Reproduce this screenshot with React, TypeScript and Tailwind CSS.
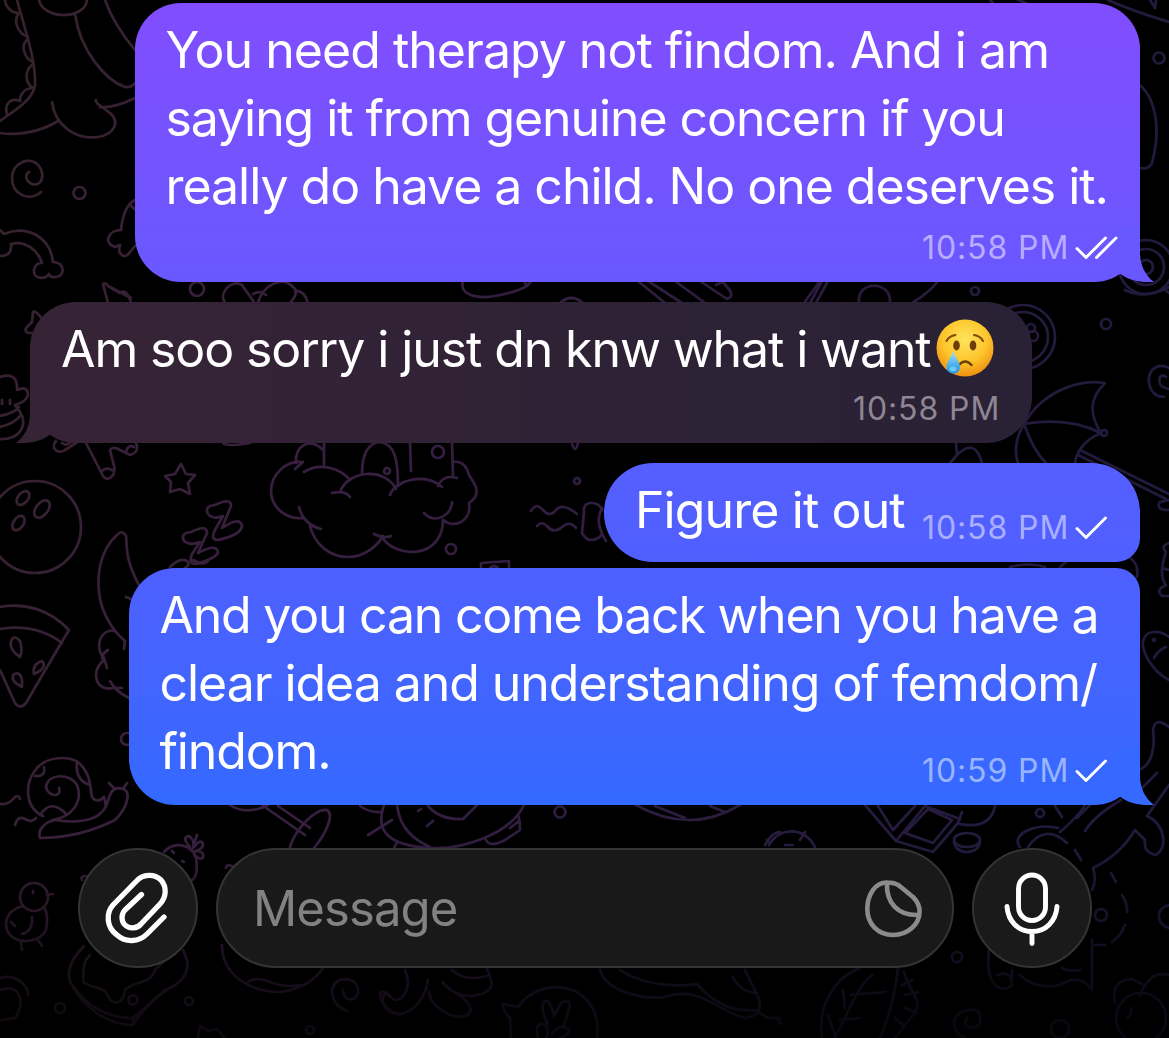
import type { ReactNode } from 'react';

const FONT = "font-[Inter,'Liberation_Sans',sans-serif]";

// Line drawings of the chat wallpaper
const doodles = [
    // dinosaur
    'M17 0C25 30 36 60 35 85C33 100 15 110 0 121',
    'M5 0C6 8 12 13 19 13C13 20 17 33 28 37M28 39C20 45 24 58 33 62M33 64C25 70 24 82 33 88C24 88 20 95 20 101C10 97 4 105 7 114',
    'M39 0C43 20 85 20 87 0M75 14C80 50 105 80 125 87Q131 88 135 83M105 0C112 20 125 38 135 50',
    'M0 133C20 136 42 131 58 121M52 102C55 125 75 140 98 137C115 134 120 122 110 113L98 104Q95 101 96 100M100 107C112 108 125 103 135 98',
    // spiral, bone, paw
    'M41 192C30 202 12 195 12 178C12 163 30 155 39 166C46 176 41 187 32 184C25 181 25 174 29 172',
    'M0 230L4 234C25 225 50 235 53 262C65 262 66 277 55 277Q50 278 49 274C45 280 33 279 34 270Q35 263 42 263C38 250 25 240 11 244C12 252 8 256 0 256',
    'M135 200C125 205 122 220 121 230C108 230 103 243 115 247L120 245C117 255 125 260 130 252L135 246M130 205L138 212',
    // party hat, bow
    'M108 303L103 284Q105 282 108 286L120 293Q127 288 131 303M108 286L131 298',
    'M225 303C218 292 232 279 242 285L254 302M258 302C264 285 282 275 293 287Q300 292 290 303M253 294Q260 290 266 295M295 291Q304 290 308 303',
    'M33 333Q24 334 26 328L32 322L33 312Q36 310 42 319',
    // things peeking out between the first two messages
    'M463 281C458 298 485 299 500 295C520 291 529 286 531 281M524 281L527 286M560 303Q571 293 583 303',
    'M638 281L665 303M648 281L682 303M675 281L705 303M700 281L727 299Q735 296 728 288L722 281M716 285L724 281',
    'M804 303L820 281M810 303L822 281M816 303L828 281M859 303C856 280 892 280 890 303M912 303Q930 292 938 281',
    // cupcake, gingerbread legs, star
    'M0 377Q15 372 17 385V390Q28 385 28 395Q26 402 15 405L20 412C28 425 20 440 0 439M0 416Q15 413 19 407M0 427Q14 424 21 415M2 400V404M10 400V404',
    'M56 441C50 448 58 455 65 450L76 443M62 443Q66 446 70 443M86 443L101 472Q106 484 113 475Q116 470 113 462L110 450Q113 446 120 450L130 455Q140 452 136 443M101 472Q106 466 114 471M126 452Q128 444 134 447',
    'M181 464L186 474L195 475L188 483L190 494L180 489L170 492L171 482L165 476L175 474ZM223 443Q228 447 250 443',
    // moon and zzz
    'M139 585C125 560 127 545 126 536Q122 529 117 535C100 550 97 575 99 592C101 612 112 630 125 641L124 649',
    'M208 514Q204 506 215 505Q231 497 231 506L222 528Q240 516 242 526Q241 535 218 540Q210 540 215 530L223 516Q213 520 208 514Z',
    'M184 541Q180 533 191 532Q207 524 207 533L198 553Q216 543 218 552Q217 558 196 564Q188 564 192 554L200 542Q190 546 184 541Z',
    'M170 567Q180 557 187 561Q191 564 185 568M193 560Q203 566 208 561',
    // castle in the clouds
    'M301 462C285 461 271 475 271 491C271 508 287 520 304 518M299 507C302 520 312 527 321 529M310 526C315 545 330 557 348 557C365 557 378 545 383 536M374 534Q383 539 391 536M381 536C390 550 405 552 415 552C435 550 443 535 443 520',
    'M424 513C435 525 452 515 452 502M443 520C455 530 472 520 469 503Q481 495 474 483L469 475Q465 460 453 462M438 486Q443 474 457 478M390 495C395 480 425 472 442 487M332 493Q345 490 350 497M340 492C348 470 385 467 396 489M304 472C320 462 340 468 350 480M295 469L303 462',
    'M296 463C295 445 310 437 323 450M324 443V466M362 474C362 450 370 443 380 442C395 444 398 460 398 486M410 443L411 471M452 443L453 475',
    'M531 511Q536 502 543 510T556 510T577 514M537 526Q542 520 548 527T562 527T576 528M572 443Q575 455 578 443',
    'M602 510Q600 503 591 503Q583 503 584 512L582 533Q586 540 591 540Q598 540 602 534M602 508Q594 522 606 541M481 567V563L509 561V567M490 568Q494 564 498 568',
    // right edge, upper half
    'M1108 0Q1130 10 1169 22M1150 0L1155 8L1156 0M990 0L993 3M1018 0L1026 3M1141 86C1156 100 1161 130 1152 163Q1148 170 1141 168M1163 288L1169 293M1125 290Q1145 300 1169 287',
    'M1164 397C1150 397 1145 380 1152 370Q1160 363 1169 368M1169 389Q1157 387 1160 377Q1163 374 1166 377',
    'M1024 424C1040 395 1075 378 1105 383C1088 400 1090 415 1101 433C1085 425 1060 418 1024 424C1014 440 1015 455 1018 463M1024 424Q1033 450 1046 463M1101 433Q1078 443 1075 463',
    'M1080 450L1169 494M1078 455L1166 499M1169 500L1160 502Q1155 510 1169 510M956 443L957 455L950 463M957 455Q975 437 982 463',
    'M1169 543Q1160 546 1166 552Q1158 575 1166 585Q1155 590 1162 596H1169M1162 568L1169 570M1010 567Q1030 562 1045 567M1060 567L1066 562M1130 558Q1139 564 1137 577',
    'M1169 680C1150 670 1142 650 1143 642C1145 629 1160 630 1169 637M1154 658Q1158 650 1166 647M1169 727Q1155 716 1153 730C1156 750 1150 765 1141 769M1157 773L1141 789',
    // pizza slice, bush
    'M0 607C25 602 50 610 69 630L60 645L26 703Q20 710 15 703L0 670M0 629C25 625 45 630 62 643',
    'M20 657Q9 650 11 641Q14 634 20 641Q23 650 20 657ZM34 674Q32 664 42 661Q48 668 34 674ZM22 687Q11 682 13 675Q20 670 22 680Z',
    'M115 631C100 628 94 648 104 658L107 668M108 650Q100 655 103 661C90 672 96 692 113 688M110 681Q116 692 129 698M113 688H122M126 597L131 599',
    // snail
    'M43 816C25 808 25 785 34 772C44 755 72 755 80 764C92 776 90 790 92 797Q97 804 104 797L106 806M59 788C62 798 48 797 46 787C48 773 70 773 77 785C84 803 70 818 52 820',
    'M35 776Q46 777 44 767M77 763Q75 780 90 785M40 815Q51 798 66 814M106 806C100 820 80 824 55 820C45 822 37 830 40 838C70 838 95 830 115 820C130 805 130 790 123 789Q113 786 110 795L106 806M115 789L109 783M123 789L127 783M0 804Q8 805 13 799T20 799M15 825Q18 815 25 819T36 818',
    // racket, animal under the last message
    'M230 805C240 812 255 812 268 805M262 805L305 835M278 806L310 828M290 847C295 830 315 808 327 810C335 815 325 835 314 848M360 806Q370 813 382 812M368 835L392 820',
    'M384 805C377 825 380 845 430 848C460 850 510 835 524 805M397 805C400 830 415 840 430 847M428 806Q440 820 463 819L477 805M486 840Q490 848 505 840L520 830Q520 820 518 815M510 828L519 821M418 811L421 809M427 826L433 821M397 842L394 848',
    'M636 805Q690 835 740 805M655 806L685 818M710 806L725 812M765 845Q772 832 780 832M767 840L770 843M769 845C780 826 805 827 815 847M785 845H793M800 840L805 832',
    // game pieces and diver
    'M865 805L896 841L933 852L958 823L962 812M878 806L893 830L915 806M896 841L925 806L960 819M905 833L928 809L952 820L933 843ZM960 824Q990 830 995 806',
    'M1060 832Q1080 815 1086 803M1058 828C1035 822 1010 835 1020 847M1028 847Q1045 823 1067 843M1055 806L1062 817M1077 818L1092 803M1085 831Q1095 815 1121 800M1075 850L1081 860M1147 816L1169 785',
    'M1147 816C1166 825 1168 850 1155 855Q1143 852 1145 840L1135 830Q1120 855 1093 868Q1097 880 1092 890M1111 873L1116 882M1122 895Q1128 905 1127 912M1125 925Q1120 937 1112 942M1105 945H1095M1169 905Q1158 908 1159 917T1169 928',
    // chick, strawberry, toast
    'M23 906C6 910 2 925 10 935C20 945 40 942 46 930Q49 915 44 907M32 917Q33 931 22 934M47 895L53 894M21 943L22 950M38 940L42 946M33 891V893M11 922L15 926',
    'M164 852C175 840 192 845 196 858C198 870 196 878 192 880M190 847Q181 837 189 836Q195 840 193 847L197 835M193 848Q202 837 203 845Q202 850 195 851Q205 851 203 858Q197 860 194 853M172 851L174 853M182 861L184 862',
    'M84 946C70 960 65 975 72 985C85 1010 110 1025 133 1025C145 1005 165 990 175 985Q190 975 187 960L183 950M90 955C80 965 85 975 83 982C95 990 105 985 110 1000Q122 1008 125 990C135 980 150 985 155 970L165 960M72 985Q95 1018 133 1018L165 990M133 1018V1025',
    'M0 978C15 973 28 985 28 995M0 990C22 982 25 1005 15 1018L0 1020M198 1038L200 1026L208 1031L217 1029L225 1038',
    'M222 945C222 975 250 992 280 992C300 990 315 980 323 968M248 982Q255 976 270 982T300 985M226 868Q226 864 232 866M82 880Q80 876 86 876',
    'M347 1011C330 1005 327 985 340 980C355 976 363 990 355 998Q345 1003 343 990M400 1015Q380 1008 380 993Q384 990 390 996',
    // octopus, speech balloon, plane
    'M405 970C412 985 405 1000 395 1000L385 993Q378 1005 392 1013C410 1018 425 1000 428 980M443 983C445 990 468 995 471 1010Q468 1020 450 1015Q430 1005 429 992M443 982C455 1000 485 1000 492 985Q490 975 487 969M452 970Q465 982 487 976',
    'M503 1004L518 1007C530 990 550 985 565 988C590 993 600 1015 597 1038M503 1004Q503 1012 510 1018L511 1038M548 1024C540 1010 542 1000 546 1001Q550 1000 554 1016L561 1003Q570 998 570 1006L564 1025M538 1038Q534 1022 545 1024Q550 1032 546 1038M552 1034Q560 1022 569 1030Q568 1036 560 1038',
    'M600 970C605 990 640 1000 665 997C700 985 715 1010 745 1018Q765 1015 758 997L745 970M620 970C650 990 690 985 697 984C715 1005 735 1012 755 1010L768 1018H780M733 977Q740 992 757 993',
    // leaf, tail, scroll, cloud
    'M860 968C830 980 818 1010 822 1038M835 1038C850 1010 855 990 872 975M845 1008L843 990M850 995L885 992M840 1020L860 1018M835 1035L828 1015M898 968C895 995 890 1015 880 1038M904 972C910 995 925 1000 913 1015Q905 1025 895 1038M902 985L912 980M905 995L918 992M905 1008L917 1013M895 1018L903 1025',
    'M978 1011C968 1007 953 1013 954 1025Q957 1036 965 1037M978 1011Q985 1025 972 1028Q962 1026 967 1018M769 1018H777L781 1024',
    'M989 950C985 985 1000 995 1012 985Q1012 970 997 975M1012 970V980M1020 975Q1035 990 1060 985Q1080 972 1092 990V940M1062 968Q1070 972 1080 970M1115 1003Q1110 980 1132 979L1142 984M1140 995Q1150 970 1169 975M1127 1018Q1132 1015 1131 1008',
];

const rings = [
    [79.5, 193, 6], [197, 289, 7], [975, 291, 4], [35, 527, 46], [438, 452, 6], [387, 471, 3],
    [451, 549, 5], [577, 481, 3], [1159, 58, 5.5], [1146, 267, 27], [1146, 267, 18], [1146, 267, 7],
    [1023, 337, 32], [1023, 337, 25], [1031, 328, 4], [1033, 336, 5], [1106, 324, 5], [1104, 433, 3],
    [127, 739, 6], [34, 897, 14], [560, 812, 5.5], [1040, 813, 4], [60, 1008, 5], [133, 1000, 4.5],
    [189, 1001, 4], [310, 1030, 4], [1101, 915, 6], [957, 957, 5], [1060, 1029, 9], [1141, 1018, 25], [1154, 640, 1],
];

function Wallpaper() {
    return (
        <div className="absolute inset-0 overflow-hidden">
            <svg width="1169" height="1038" viewBox="0 0 1169 1038" fill="none" stroke="url(#ink)" strokeWidth="2.7" strokeLinecap="round" strokeLinejoin="round">
                <defs>
                    <linearGradient id="ink" gradientUnits="userSpaceOnUse" x1="0" y1="0" x2="1169" y2="250">
                        <stop offset="0" stopColor="#36222d" />
                        <stop offset="0.35" stopColor="#381f41" />
                        <stop offset="1" stopColor="#211a3d" />
                    </linearGradient>
                </defs>
                {doodles.map((d) => (
                    <path key={d} d={d} />
                ))}
                {rings.map(([cx, cy, r]) => (
                    <circle key={`${cx}-${cy}-${r}`} cx={cx} cy={cy} r={r} />
                ))}
                <ellipse cx="23" cy="498" rx="5" ry="8" transform="rotate(40 23 498)" />
                <ellipse cx="42" cy="509" rx="6" ry="10" transform="rotate(38 42 509)" />
                <ellipse cx="18.5" cy="523" rx="5" ry="8" transform="rotate(35 18.5 523)" />
                <ellipse cx="967" cy="840" rx="13" ry="7" />
                <path d="M954 842Q956 852 967 852Q979 851 980 842" />
            </svg>
            <div className="absolute inset-x-0 bottom-0 h-[200px] bg-linear-to-b from-transparent via-black/60 via-70% to-black/75" />
        </div>
    );
}

function Tail({ side, color }: { side: 'left' | 'right'; color: string }) {
    return (
        <svg
            className={side === 'right' ? 'absolute -right-[15px] bottom-0' : 'absolute -left-[15px] bottom-0 -scale-x-100'}
            width="60"
            height="56"
            viewBox="0 0 60 56"
            fill={color}
        >
            <path d="M20 0H45V27C45 40 51 50 59 56C45 57 33 54 25 47.5L14 40Z" />
        </svg>
    );
}

function Ticks({ read = false }: { read?: boolean }) {
    return (
        <svg width="44" height="24" viewBox="0 0 44 24" fill="none" stroke="white" strokeWidth="2.9" strokeLinecap="round" strokeLinejoin="round">
            <path d="M2 12.5L11 21.5L30.5 2" />
            {read && <path d="M21.5 21.5L41 2" />}
        </svg>
    );
}

function Stamp({ time, className, children }: { time: string; className: string; children?: ReactNode }) {
    return (
        <div className={`absolute flex items-center text-[32px] leading-[40px] whitespace-nowrap ${className}`}>
            <span className="w-[153px] tracking-[0.9px]">{time}</span>
            {children}
        </div>
    );
}

function CryingFace() {
    return (
        <svg className="mt-[17px] ml-[5px] shrink-0" width="58" height="58" viewBox="0 0 58 58" fill="none">
            <defs>
                <radialGradient id="face" cx="0.5" cy="0.35" r="0.65">
                    <stop offset="0" stopColor="#ffe45c" />
                    <stop offset="0.6" stopColor="#fdc52c" />
                    <stop offset="1" stopColor="#ee9010" />
                </radialGradient>
                <linearGradient id="tear" x1="0" y1="0" x2="0" y2="1">
                    <stop offset="0" stopColor="#9fe2fb" />
                    <stop offset="1" stopColor="#1c92e4" />
                </linearGradient>
            </defs>
            <circle cx="29" cy="29" r="28.5" fill="url(#face)" />
            <ellipse cx="20.5" cy="26.5" rx="3.3" ry="5" fill="#6b3f07" />
            <ellipse cx="37" cy="26.5" rx="3.3" ry="5" fill="#6b3f07" />
            <path d="M10.5 22Q13 17 19.5 16M38 16Q44.500 17 47 22" stroke="#7d4a08" strokeWidth="2" strokeLinecap="round" />
            <path d="M23 46Q29 39 35.5 46" stroke="#6b3f07" strokeWidth="2.4" strokeLinecap="round" />
            <path d="M17 32C19 38 24 43 24 48C24 52 21 54.5 17.5 54.5C13.5 54.5 10.5 52 10.5 48C10.5 43 15.5 38 17 32Z" fill="url(#tear)" />
            <ellipse cx="17" cy="50" rx="3.5" ry="2.5" fill="#6ccbf5" />
        </svg>
    );
}

const line = 'block whitespace-nowrap';

export default function App() {
    return (
        <div className={`relative h-[1038px] w-[1169px] overflow-hidden bg-black ${FONT}`}>
            <Wallpaper />

            {/* Messages */}
            <div className="relative flex flex-col pt-[3px] pr-[29px] pl-[30px] text-[50px] leading-[68px] text-white">
                <div className="relative h-[278.5px] w-[1005px] self-end rounded-[46px] bg-linear-to-b from-[#814dff] to-[#6958ff] pt-[13px] pl-[30.5px]">
                    <Tail side="right" color="#6a58ff" />
                    <span className={`${line} tracking-[-0.98px]`}>You need therapy not findom. And i am</span>
                    <span className={`${line} tracking-[-1.08px]`}>saying it from genuine concern if you</span>
                    <span className={`${line} tracking-[-1.03px]`}>really do have a child. No one deserves it.</span>
                    <Stamp time="10:58 PM" className="right-[21px] bottom-[14px] text-[#b9adff]">
                        <Ticks read />
                    </Stamp>
                </div>

                <div className="relative mt-[20.5px] flex h-[141px] w-[1002px] rounded-[46px] bg-linear-to-r from-[#372336] to-[#292135] pt-[13px] pl-[31px]">
                    <Tail side="left" color="#372336" />
                    <span className="relative whitespace-nowrap tracking-[-1.1px]">Am soo sorry i just dn knw what i want</span>
                    <div className="-mt-[13px]">
                        <CryingFace />
                    </div>
                    <Stamp time="10:58 PM" className="right-[26px] bottom-[14px] text-[#8f8694]" />
                </div>

                <div className="relative mt-5 h-[99px] w-[536px] self-end rounded-[49px] rounded-br-[24px] bg-linear-to-b from-[#565eff] to-[#4f60ff] pt-[13px] pl-[31px]">
                    <span className={`${line} tracking-[-0.9px]`}>Figure it out</span>
                    <Stamp time="10:58 PM" className="right-[21px] bottom-[14px] text-[#aab0ff]">
                        <Ticks />
                    </Stamp>
                </div>

                <div className="relative mt-1.5 h-[237px] w-[1011px] self-end rounded-[46px] rounded-tr-[24px] bg-linear-to-b from-[#4e60ff] to-[#3369ff] pt-[13px] pl-[30.5px]">
                    <Tail side="right" color="#3569ff" />
                    <span className={`${line} tracking-[-1.23px]`}>And you can come back when you have a</span>
                    <span className={`${line} tracking-[-1.05px]`}>clear idea and understanding of femdom/</span>
                    <span className={`${line} tracking-[-1.15px]`}>findom.</span>
                    <Stamp time="10:59 PM" className="right-[21px] bottom-[14px] text-[#9ab5ff]">
                        <Ticks />
                    </Stamp>
                </div>
            </div>

            {/* Composer */}
            <div className="relative mt-[43px] flex gap-[18px] pl-[78px]">
                <button className="flex size-[120px] items-center justify-center rounded-full border-2 border-[#343435] bg-[#1a1a1b]">
                    <svg width="76" height="76" viewBox="100 870 76 76" fill="none" stroke="white" strokeWidth="5.3" strokeLinecap="round" strokeLinejoin="round">
                        <path d="M164 917L147 934C139 942 126 943 117 935C106 927 106 913 113 905L136.5 881C143 874 154 873.5 161 880C167 887 166.5 897 160 904L141 924C137 929 129 929 125 925C121 921 121 914 125 910L141.5 894.5" />
                    </svg>
                </button>
                <div className="flex h-[120px] w-[738px] items-center justify-between rounded-full border-2 border-[#343435] bg-[#19191a] pr-[29px] pl-[35px]">
                    <span className="pt-px text-[49px] leading-[68px] tracking-[-0.9px] text-[#828283]">Message</span>
                    <svg width="60" height="60" viewBox="863 878 60 60" fill="none" stroke="#8b8b8c" strokeWidth="4.6" strokeLinecap="round" strokeLinejoin="round">
                        <path d="M887.5 882.5C875 882 867.3 895 867.3 909C867.3 924 878 935 893 935C908 935 919.5 924 919.5 912C920 905 917 901 913 897L899 885.5C896 883.5 892 882.5 887.5 882.5Z" />
                        <path d="M887 883C886 903 898 916 919 915" />
                    </svg>
                </div>
                <button className="flex size-[120px] items-center justify-center rounded-full border-2 border-[#343435] bg-[#1a1a1b]">
                    <svg width="76" height="76" viewBox="994 870 76 76" fill="none" stroke="white" strokeWidth="4.9" strokeLinecap="round" strokeLinejoin="round">
                        <rect x="1018.5" y="875" width="27" height="45.5" rx="13.5" />
                        <path d="M1007 906.5C1008 921 1018 931.5 1032 931.5C1046 931.5 1056 921 1057 906.5M1032 932V943.5" />
                    </svg>
                </button>
            </div>
        </div>
    );
}
